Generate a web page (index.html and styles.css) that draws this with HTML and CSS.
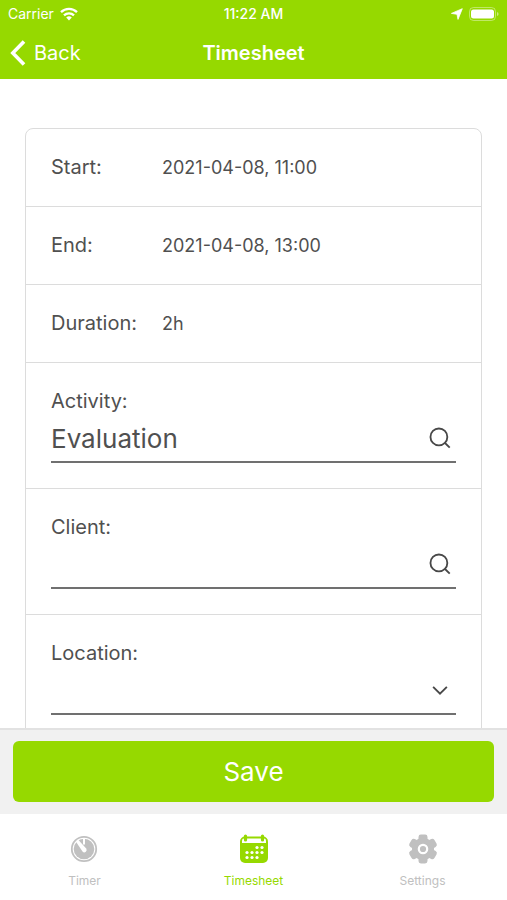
FILE: index.html
```html
<!DOCTYPE html>
<html lang="en">
<head>
<meta charset="utf-8">
<meta name="viewport" content="width=device-width, initial-scale=1">
<title>Timesheet</title>
<link rel="stylesheet" href="styles.css">
</head>
<body>
<header class="top">
  <div class="status">
    <span class="carrier">Carrier
      <svg width="18" height="14" viewBox="0 0 18 14" fill="none" stroke="currentColor" stroke-width="2.3"><path d="M1 5.2a11.5 11.5 0 0 1 16 0M4 8.3a7.2 7.2 0 0 1 10 0"/><path d="M6.2 10.6a4 4 0 0 1 5.6 0L9 13.5z" fill="currentColor" stroke="none"/></svg>
    </span>
    <span class="clock">11:22 AM</span>
    <span class="indicators">
      <svg width="12" height="12" viewBox="0 0 12 12" fill="currentColor"><path d="M11.3.7 7 11.4 6 6.3.4 5.4z" stroke="currentColor" stroke-linejoin="round" stroke-width=".8"/></svg>
      <svg width="30" height="14" viewBox="0 0 30 14" fill="currentColor"><rect x=".5" y=".5" width="26" height="13" rx="4" fill="none" stroke="currentColor" opacity=".4"/><rect x="2" y="2.5" width="23" height="9" rx="2.5"/><path d="M28 5v4q1.6-.6 1.6-2T28 5z" opacity=".5"/></svg>
    </span>
  </div>
  <nav class="navbar">
    <a class="back" href="#back"><svg width="16" height="26" viewBox="0 0 16 26" fill="none" stroke="currentColor" stroke-width="3.6"><path d="M14 1.5 2.8 13 14 24.5"/></svg>Back</a>
    <h1 class="title">Timesheet</h1>
  </nav>
</header>
<main class="content">
  <form class="card" id="entry">
    <div class="row"><span class="label">Start:</span><span class="value">2021-04-08, 11:00</span></div>
    <div class="row"><span class="label">End:</span><span class="value">2021-04-08, 13:00</span></div>
    <div class="row"><span class="label">Duration:</span><span class="value">2h</span></div>
    <div class="group">
      <label class="label" for="activity">Activity:</label>
      <div class="field"><input class="control" id="activity" type="text" value="Evaluation">
        <svg class="icon" viewBox="0 0 24 24"><circle cx="10.8" cy="10.8" r="9.2"/><path d="m17.2 17.2 5.4 5.4"/></svg></div>
    </div>
    <div class="group">
      <label class="label" for="client">Client:</label>
      <div class="field"><input class="control" id="client" type="text">
        <svg class="icon" viewBox="0 0 24 24"><circle cx="10.8" cy="10.8" r="9.2"/><path d="m17.2 17.2 5.4 5.4"/></svg></div>
    </div>
    <div class="group">
      <label class="label" for="location">Location:</label>
      <div class="field"><select class="control" id="location"><option></option></select>
        <svg class="icon" viewBox="0 0 24 24"><path d="m4.5 8.5 7.5 7.5 7.5-7.5"/></svg></div>
    </div>
  </form>
</main>
<div class="actions"><button class="save" type="submit" form="entry">Save</button></div>
<nav class="tabs">
  <a class="tab" href="#timer"><svg width="30" height="30" viewBox="0 0 30 30"><circle cx="14" cy="15" r="12.2" fill="none" stroke="currentColor" stroke-width="1.8"/><circle cx="14" cy="15" r="10.3" fill="currentColor"/><path d="M14 4v6.5" stroke="#fff" stroke-width="2"/><path d="M5.8 7.6 8 5.4l8.2 9.2a2.4 2.4 0 0 1-3.5 3.2z" fill="#fff"/></svg>Timer</a>
  <a class="tab active" href="#timesheet"><svg width="30" height="30" viewBox="0 0 30 30"><rect x="1" y="2.5" width="28" height="26.5" rx="5" fill="currentColor"/><path d="M3 9V6.5Q3 4.5 5 4.5h20q2 0 2 2V9z" fill="#fff"/><path d="M6.5 2V6M23.5 2V6" stroke="currentColor" stroke-width="3.2" stroke-linecap="round"/><g fill="#fff"><circle cx="18" cy="13.5" r="1.6"/><circle cx="23" cy="13.5" r="1.6"/><circle cx="8" cy="18.5" r="1.6"/><circle cx="13" cy="18.5" r="1.6"/><circle cx="18" cy="18.5" r="1.6"/><circle cx="23" cy="18.5" r="1.6"/><circle cx="8" cy="23.5" r="1.6"/><circle cx="13" cy="23.5" r="1.6"/><circle cx="18" cy="23.5" r="1.6"/></g></svg>Timesheet</a>
  <a class="tab" href="#settings"><svg width="30" height="30" viewBox="0 0 30 30"><g fill="currentColor"><circle cx="15" cy="15" r="11"/><rect x="10.5" y=".6" width="9" height="28.8" rx="2.4"/><rect x="10.5" y=".6" width="9" height="28.8" rx="2.4" transform="rotate(60 15 15)"/><rect x="10.5" y=".6" width="9" height="28.8" rx="2.4" transform="rotate(120 15 15)"/></g><circle cx="15" cy="15" r="4.2" fill="none" stroke="#fff" stroke-width="2.2"/></svg>Settings</a>
</nav>
</body>
</html>
```
FILE: styles.css
```css
* { box-sizing: border-box; }

body {
  margin: 0;
  height: 100vh;
  display: flex;
  flex-direction: column;
  background: #fff;
  color: #505050;
  font-family: Inter, "Liberation Sans", sans-serif;
}

a { color: inherit; text-decoration: none; }
svg { display: block; flex: none; }

.top { background: #96d900; color: #fff; }

.status,
.navbar {
  display: grid;
  grid-template-columns: 1fr auto 1fr;
  align-items: center;
}

.status {
  height: 27px;
  padding: 0 8px;
  font-size: 14px;
}

.carrier,
.indicators { display: flex; align-items: center; gap: 6px; }
.indicators { justify-content: flex-end; }
.clock { font-weight: 500; }

.navbar { height: 52px; padding: 0 10px; }

.back {
  display: flex;
  align-items: center;
  gap: 8px;
  font-size: 20px;
}

.title { margin: 0; font-size: 20px; font-weight: 600; }

.content {
  flex: 1;
  min-height: 0;
  overflow: hidden;
  padding: 49px 25px 0;
}

.card {
  border: 1px solid #dcdcdc;
  border-radius: 8px;
}

.row,
.group {
  padding: 25px;
  border-bottom: 1px solid #dcdcdc;
  font-size: 20px;
  line-height: 27px;
}

.row { display: flex; }
.row .label { flex: 0 0 111px; }
.value { font-size: 18px; }
.group .label { display: block; }

.field {
  display: flex;
  align-items: center;
  padding-right: 5px;
  border-bottom: 2px solid #707070;
}

.control {
  flex: 1;
  min-width: 0;
  height: 46px;
  padding: 0;
  border: 0;
  outline: 0;
  appearance: none;
  background: none;
  color: inherit;
  font: inherit;
  font-size: 26px;
}

.icon {
  width: 22px;
  height: 22px;
  fill: none;
  stroke: #484848;
  stroke-width: 2;
}

.actions {
  padding: 11px 13px 12px;
  background: #f1f1f1;
  border-top: 2px solid #e2e2e2;
}

.save {
  display: block;
  width: 100%;
  height: 61px;
  border: 0;
  border-radius: 6px;
  background: #96d900;
  color: #fff;
  font: inherit;
  font-size: 26px;
}

.tabs {
  display: grid;
  grid-template-columns: repeat(3, 1fr);
  height: 86px;
  padding-top: 20px;
}

.tab {
  display: flex;
  flex-direction: column;
  align-items: center;
  gap: 8px;
  font-size: 12px;
  line-height: 18px;
}

.tab:not(.active) { color: #c0c0c0; }
.active { color: #96d900; }
```
